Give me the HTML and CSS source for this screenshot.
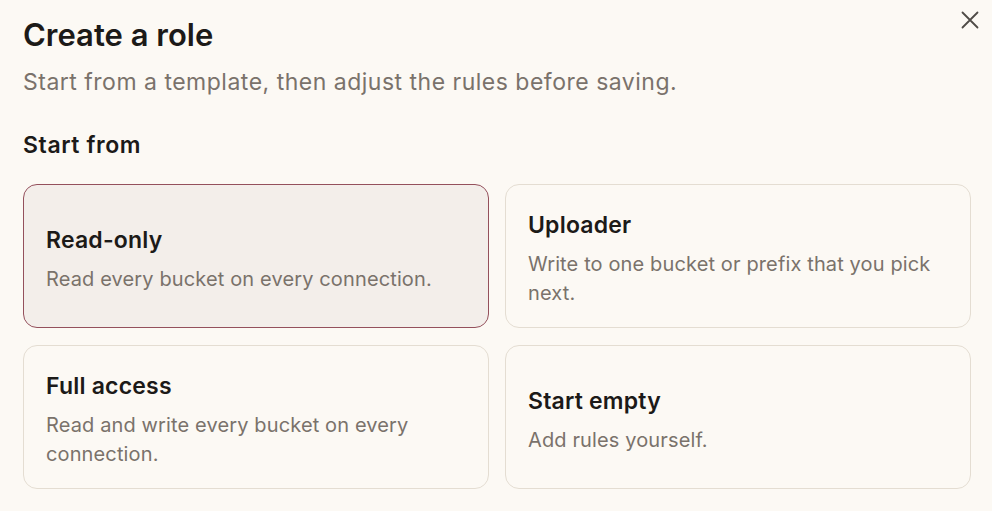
FILE: index.html
```html
<!DOCTYPE html>
<html>
<head>
<meta charset="utf-8">
<link rel="stylesheet" href="styles.css">
</head>
<body>
<div class="dialog">
  <button class="close" aria-label="Close">
    <svg width="20" height="20" viewBox="0 0 20 20"><path d="M2.5 2.5L17.5 17.5M17.5 2.5L2.5 17.5" stroke="#4f4b47" stroke-width="1.8" stroke-linecap="round" fill="none"/></svg>
  </button>
  <h1 class="title">Create a role</h1>
  <p class="subtitle">Start from a template, then adjust the rules before saving.</p>
  <h2 class="section">Start from</h2>
  <div class="grid">
    <div class="card selected">
      <div class="card-title">Read-only</div>
      <div class="card-desc">Read every bucket on every connection.</div>
    </div>
    <div class="card">
      <div class="card-title">Uploader</div>
      <div class="card-desc">Write to one bucket or prefix that you pick next.</div>
    </div>
    <div class="card">
      <div class="card-title">Full access</div>
      <div class="card-desc">Read and write every bucket on every connection.</div>
    </div>
    <div class="card">
      <div class="card-title">Start empty</div>
      <div class="card-desc">Add rules yourself.</div>
    </div>
  </div>
</div>
</body>
</html>
```
FILE: styles.css
```css
html, body {
  margin: 0;
  padding: 0;
  background: #fcf9f4;
}
body {
  font-family: Inter, "Noto Sans", sans-serif;
  color: #1c1a18;
}
.dialog {
  position: relative;
  padding: 14px 21px 0 23px;
}
.close {
  position: absolute;
  top: 10px;
  right: 12px;
  background: none;
  border: 0;
  padding: 0;
  width: 20px;
  height: 20px;
}
.title {
  margin: 0;
  font-size: 31px;
  line-height: 42px;
  font-weight: 600;
  letter-spacing: 0;
}
.subtitle {
  margin: 10px 0 0;
  font-size: 23px;
  line-height: 32px;
  letter-spacing: 0.5px;
  color: #7a726b;
}
.section {
  margin: 31px 0 0;
  font-size: 23px;
  line-height: 32px;
  letter-spacing: 0.6px;
  font-weight: 600;
}
.grid {
  margin-top: 23px;
  display: grid;
  grid-template-columns: 1fr 1fr;
  column-gap: 16px;
  row-gap: 17px;
}
.card {
  box-sizing: border-box;
  min-height: 144px;
  border: 1px solid #e4ddd2;
  border-radius: 14px;
  padding: 25px 22px 19px 22px;
  display: flex;
  flex-direction: column;
  justify-content: center;
}
.card.selected {
  background: #f3eeea;
  border-color: #94505c;
}
.card-title {
  font-size: 23px;
  line-height: 30px;
  letter-spacing: 0.2px;
  font-weight: 600;
}
.card-desc {
  margin-top: 10px;
  font-size: 20px;
  line-height: 29px;
  letter-spacing: 0.13px;
  color: #7a726b;
}
```
